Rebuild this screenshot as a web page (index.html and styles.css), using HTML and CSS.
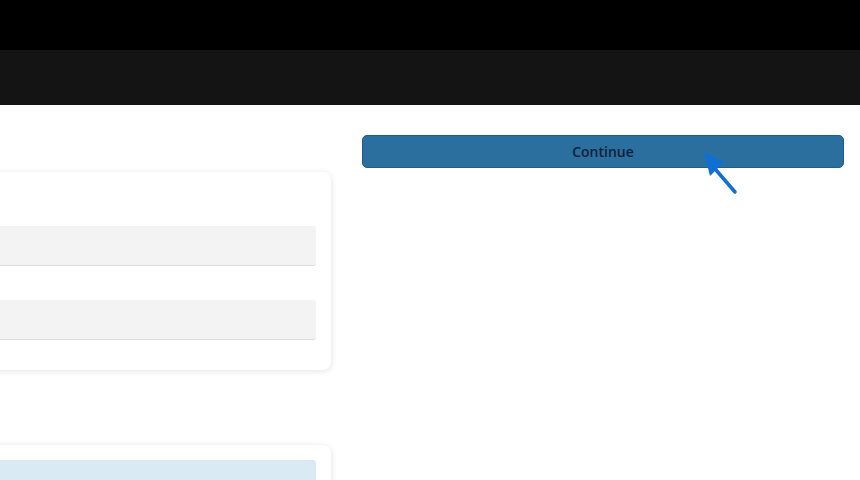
FILE: index.html
```html
<!DOCTYPE html>
<html lang="en">
<head>
    <meta charset="UTF-8">
    <meta name="viewport" content="width=device-width, initial-scale=1.0">
    <title>Checkout</title>
    <link rel="stylesheet" href="styles.css">
</head>
<body>
    <div class="topbar"></div>
    <div class="navbar"></div>
    <div class="main">
        <div class="left">
            <div class="card">
                <div class="input"></div>
                <div class="input"></div>
            </div>
            <div class="card second">
                <div class="input blue"></div>
            </div>
        </div>
        <div class="right">
            <button class="continue">Continue</button>
            <svg class="cursor" width="40" height="46" viewBox="0 0 40 46">
                <line x1="32" y1="40" x2="13" y2="18" stroke="#0f6fd2" stroke-width="3.5" stroke-linecap="round"/>
                <polygon points="1,0 21,10 7,24" fill="#0f6fd2"/>
            </svg>
        </div>
    </div>
</body>
</html>
```

FILE: styles.css
```css
body {
    margin: 0;
    background-color: #fff;
    font-family: "Open Sans", Arial, sans-serif;
    overflow: hidden;
}

.topbar {
    height: 50px;
    background-color: #000;
}

.navbar {
    height: 55px;
    background-color: #141414;
}

.main {
    display: flex;
    gap: 31px;
    padding-top: 30px;
    margin-left: -69px;
}

.left {
    width: 400px;
    flex-shrink: 0;
    margin-top: 37px;
}

.card {
    background-color: #fff;
    border-radius: 8px;
    box-shadow: 0 1px 6px rgba(0, 0, 0, 0.12);
    padding: 54px 15px 30px;
    display: flex;
    flex-direction: column;
    gap: 34px;
}

.card.second {
    margin-top: 75px;
    padding: 15px;
}

.input {
    height: 39px;
    background-color: #f3f3f3;
    border-bottom: 1px solid #dcdcdc;
    border-radius: 3px;
}

.input.blue {
    background-color: #d9eaf5;
    border-bottom: none;
    height: 40px;
}

.right {
    position: relative;
    width: 482px;
    flex-shrink: 0;
}

.continue {
    display: block;
    width: 100%;
    height: 33px;
    background-color: #2a6f9e;
    border: 1px solid #1d5f8c;
    border-radius: 5px;
    color: #0f1f3a;
    font-family: "Open Sans", Arial, sans-serif;
    font-size: 14px;
    font-weight: 600;
    cursor: pointer;
}

.cursor {
    position: absolute;
    left: 341px;
    top: 17px;
}
```
